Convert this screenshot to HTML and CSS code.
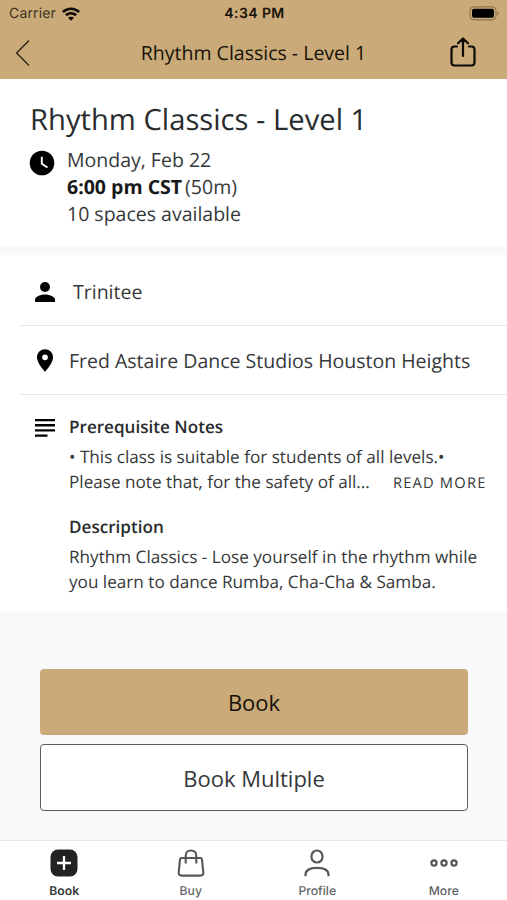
FILE: index.html
```html
<!DOCTYPE html>
<html lang="en">
<head>
<meta charset="utf-8">
<meta name="viewport" content="width=device-width, initial-scale=1">
<title>Rhythm Classics - Level 1</title>
<link rel="stylesheet" href="styles.css">
</head>
<body>
<div class="app">
  <header class="header">
    <div class="status">
      <div class="carrier"><span>Carrier</span>
        <svg width="18" height="14" viewBox="0 0 18 14" fill="none" stroke="#0d0b07" stroke-width="2.600"><path d="M.9 5C5.500.7 12.500.7 17.100 5M3.900 8.300c2.900-2.700 7.300-2.700 10.200 0"/><path d="M9 13.700 6 10.800c1.600-1.500 4.400-1.500 6 0z" fill="#0d0b07" stroke="none"/></svg>
      </div>
      <time class="clock">4:34 PM</time>
      <svg class="battery" width="31" height="15" viewBox="0 0 31 15"><rect x="1" y=".8" width="26" height="13" rx="4" fill="none" stroke="#8d7750" stroke-width="1.200"/><rect x="3" y="2.800" width="22" height="9" rx="2" fill="#000"/><path d="M28.500 5v4.600q3-2.300 0-4.600z" fill="#8d7750"/></svg>
    </div>
    <div class="navbar">
      <svg width="16" height="28" viewBox="0 0 16 28" fill="none" stroke="#29200f" stroke-width="1.300"><path d="M14 1.500 1.600 14 14 26.500"/></svg>
      <div class="nav-title">Rhythm Classics - Level 1</div>
      <svg class="share" width="26" height="31" viewBox="0 0 26 31" fill="none" stroke="#0d0b07" stroke-width="2.200" stroke-linecap="round" stroke-linejoin="round"><path d="M7 9.500H4.500Q1.500 9.500 1.500 12.500v13q0 3 3 3h17q3 0 3-3v-13q0-3-3-3H19M13 19V1.500M8 6.200l5-4.700 5 4.700"/></svg>
    </div>
  </header>
  <section class="summary">
    <h1>Rhythm Classics - Level 1</h1>
    <div class="when">
      <svg width="26" height="26" viewBox="0 0 26 26"><circle cx="13" cy="13" r="12.300" fill="#000"/><path d="M12.800 6.700v7.100l5.700 3.700" fill="none" stroke="#fff" stroke-width="1.900"/></svg>
      <div class="when-text">
        <div class="date">Monday, Feb 22</div>
        <div class="time"><b>6:00 pm CST</b><span>(50m)</span></div>
        <div class="spaces">10 spaces available</div>
      </div>
    </div>
  </section>
  <section class="details">
    <div class="row teacher">
      <svg width="20" height="20" viewBox="0 0 20 20"><circle cx="10" cy="5" r="5"/><path d="M0 20v-2.400c0-3.400 6.700-5.200 10-5.200s10 1.800 10 5.200V20z"/></svg>
      <div>Trinitee</div>
    </div>
    <div class="row place">
      <svg width="20" height="23" viewBox="0 0 20 23"><path fill-rule="evenodd" d="M10 .2a8.100 8.100 0 0 0-8.100 8.100C1.900 14.400 10 22.800 10 22.800s8.100-8.400 8.100-14.500A8.100 8.100 0 0 0 10 .2m0 5.200a2.900 2.900 0 1 1 0 5.800 2.900 2.900 0 0 1 0-5.800"/></svg>
      <div>Fred Astaire Dance Studios Houston Heights</div>
    </div>
    <div class="notes">
      <svg width="20" height="18" viewBox="0 0 20 18"><path d="M0 0h20v2.200H0zM0 5.100h20v2.300H0zM0 10.300h20v2.300H0zM0 15.500h12.500v2.300H0z"/></svg>
      <div class="notes-body">
        <h2 class="prereq">Prerequisite Notes</h2>
        <p class="line l1">• This class is suitable for students of all levels.•</p>
        <div class="more-row"><p class="line l2">Please note that, for the safety of all...</p><span class="read">READ MORE</span></div>
        <h2 class="desc">Description</h2>
        <p class="line l3">Rhythm Classics - Lose yourself in the rhythm while</p>
        <p class="line l4">you learn to dance Rumba, Cha-Cha &amp; Samba.</p>
      </div>
    </div>
  </section>
  <div class="actions">
    <button class="btn primary">Book</button>
    <button class="btn outline">Book Multiple</button>
  </div>
  <nav class="tabs">
    <div class="tab active">
      <svg width="28" height="28" viewBox="0 0 28 28"><rect x=".5" y=".5" width="27" height="27" rx="7.500" fill="#202224"/><path d="M14 7v14M7 14h14" stroke="#fff" stroke-width="2.300"/></svg>
      <span>Book</span>
    </div>
    <div class="tab">
      <svg width="28" height="28" viewBox="0 0 28 28" fill="none" stroke="#55575a" stroke-width="2.100"><path d="M4.500 9h19q1.300 0 1.500 1.300l1.300 13.200q.3 3.100-2.800 3.100h-19q-3.100 0-2.800-3.100L3 10.300Q3.200 9 4.500 9zM8.700 14.500V7q0-5.500 5.300-5.500T19.300 7v7.500"/></svg>
      <span>Buy</span>
    </div>
    <div class="tab">
      <svg width="28" height="28" viewBox="0 0 28 28" fill="none" stroke="#55575a" stroke-width="2.200"><rect x="8.500" y="1.500" width="11" height="12" rx="5.500"/><path d="M2.500 27.300v-1.500q0-7 11.500-7t11.500 7v1.500"/></svg>
      <span>Profile</span>
    </div>
    <div class="tab">
      <svg width="28" height="28" viewBox="0 0 28 28" fill="none" stroke="#55575a" stroke-width="2.200"><circle cx="4" cy="14" r="2.600"/><circle cx="14" cy="14" r="2.600"/><circle cx="24" cy="14" r="2.600"/></svg>
      <span>More</span>
    </div>
  </nav>
</div>
</body>
</html>
```

FILE: styles.css
```css
* { box-sizing: border-box; margin: 0; padding: 0; }
body { font-family: "Open Sans", sans-serif; color: #36383a; background: #fff; text-rendering: geometricPrecision; }
svg { display: block; flex: none; }
.app { width: 507px; height: 900px; display: flex; flex-direction: column; overflow: hidden; background: #f8f9fb; white-space: nowrap; }
.header { height: 79px; background: #c9aa78; color: #171209; flex: none; }
.status { height: 27px; padding: 0 7px 0 9px; display: grid; grid-template-columns: 1fr auto 1fr; align-items: center; font-family: Inter, sans-serif; font-size: 14px; line-height: 18px; letter-spacing: 0.15px; }
.carrier { display: flex; align-items: center; gap: 6px; color: #40341e; }
.clock { font-weight: 600; letter-spacing: 0.4px; padding-top: 1px; }
.battery { justify-self: end; }
.navbar { height: 51px; padding: 0 31px 0 15px; display: grid; grid-template-columns: 26px 1fr 26px; align-items: center; column-gap: 8px; }
.nav-title { font-size: 19.5px; text-align: center; padding-left: 16px; }
.summary { height: 167px; padding: 20px 30px 0; background: #fff; flex: none; }
h1 { font-size: 29.2px; font-weight: 400; line-height: 40px; color: #292b2d; }
.when { display: flex; gap: 12px; padding-top: 7px; font-size: 19.5px; line-height: 27px; }
.when svg { margin-top: 4px; margin-left: -1px; }
.time { display: flex; gap: 3px; }
.time b { color: #171819; }
.details { height: 357px; margin-top: 9px; padding-left: 20px; background: #fff; flex: none; }
.row { display: flex; align-items: center; height: 71px; padding-left: 15px; border-bottom: 1px solid #e8e9ea; font-size: 19.5px; }
.teacher { gap: 18px; padding-top: 3px; }
.place { height: 69px; gap: 14px; }
.notes { display: flex; gap: 14px; padding: 20px 0 0 15px; }
.notes > svg { margin-top: 4px; }
h2 { font-size: 17.1px; font-weight: 600; line-height: 26px; color: #292b2d; }
.line { font-size: 17.15px; line-height: 24.5px; }
.l1 { margin-top: 5px; }
.more-row { display: flex; align-items: center; gap: 23px; }
.read { font-size: 14.7px; letter-spacing: 1.2px; line-height: 20px; padding-top: 1px; }
.desc { margin-top: 20px; }
.l3 { margin-top: 5px; }
.actions { height: 228px; padding: 57px 39px 0 40px; display: flex; flex-direction: column; gap: 9px; flex: none; }
.btn { height: 66px; border: 0; border-radius: 4px; font: 400 22px "Open Sans", sans-serif; }
.primary { background: #c9aa78; color: #151109; }
.outline { background: #fff; border: 1.5px solid #5b5d60; color: #36383a; height: 67px; }
.tabs { height: 60px; padding-left: 1px; border-top: 1px solid #e5e6e8; background: #fff; display: grid; grid-template-columns: repeat(4, 1fr); }
.tab { display: flex; flex-direction: column; align-items: center; padding-top: 8px; gap: 6px; font: 500 12.2px/16px Inter, sans-serif; color: #626466; }
.active { color: #36383a; font-weight: 600; }
```
